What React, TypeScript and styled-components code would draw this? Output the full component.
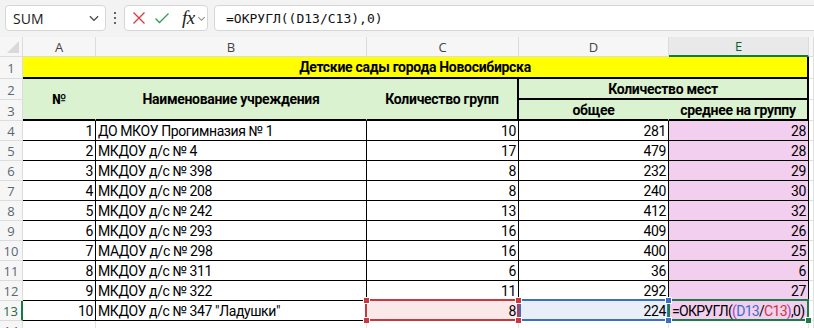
import styled, { createGlobalStyle } from 'styled-components'

const GlobalStyle = createGlobalStyle`
    html, body {
        margin: 0;
        padding: 0;
        background: #f3f3f3;
    }
    body {
        width: 814px;
        height: 328px;
        overflow: hidden;
        font-family: 'Open Sans', 'Noto Sans', sans-serif;
    }
`

const CELL_FONT = `Roboto, 'Noto Sans', sans-serif`

const Toolbar = styled.div`
    display: flex;
    align-items: flex-start;
    gap: 6px;
    height: 37px;
    box-sizing: border-box;
    padding: 5px 0 0 5px;
    overflow: hidden;
`

const Box = styled.div<{ $w?: number }>`
    display: flex;
    align-items: center;
    box-sizing: border-box;
    height: 26px;
    ${(p) => (p.$w ? `width: ${p.$w}px;` : 'flex: 1; margin-right: -12px;')}
    background: #fff;
    border: 1px solid #d6d6d6;
    border-radius: 4px;
`

const NameText = styled.span`
    flex: 1;
    padding-left: 7px;
    font-size: 14px;
    color: #1b1b1b;
`

const Dots = styled.div`
    display: flex;
    flex-direction: column;
    justify-content: center;
    gap: 3px;
    height: 26px;
    width: 6px;
    align-items: center;

    span {
        width: 2px;
        height: 2px;
        border-radius: 1px;
        background: #333;
    }
`

const IconSlot = styled.span<{ $ml: number }>`
    display: flex;
    align-items: center;
    margin-left: ${(p) => p.$ml}px;
`

const Fx = styled.span`
    font-family: 'Liberation Serif', 'DejaVu Serif', serif;
    font-style: italic;
    font-size: 19px;
    color: #222;
    margin-left: 12px;
    letter-spacing: -0.5px;
`

const FormulaText = styled.span`
    padding-left: 11px;
    font-family: 'DejaVu Sans Mono', 'Liberation Mono', monospace;
    font-size: 13px;
    color: #111;
`

const Sheet = styled.div`
    display: grid;
    grid-template-columns: 23px 73px 271px 152px 150px 140px 1fr;
    grid-template-rows: 20px 22px 21px 21px repeat(10, 20px) 1fr;
    height: 291px;
    background: #fff;
`

const Corner = styled.div`
    position: relative;
    background: #f6f6f6;
    border-right: 1px solid #dcdcdc;
    border-bottom: 1px solid #dcdcdc;
    box-sizing: border-box;

    &::after {
        content: '';
        position: absolute;
        right: 3px;
        bottom: 3px;
        border-style: solid;
        border-width: 0 0 12px 12px;
        border-color: transparent transparent #d9d9d9 transparent;
    }
`

const ColHead = styled.div<{ $sel?: boolean }>`
    display: flex;
    align-items: center;
    justify-content: center;
    box-sizing: border-box;
    background: ${(p) => (p.$sel ? '#e9e9e9' : '#f6f6f6')};
    border-right: 1px solid #dcdcdc;
    border-bottom: ${(p) => (p.$sel ? '2px solid #107c41' : '1px solid #dcdcdc')};
    font-size: 13px;
    color: ${(p) => (p.$sel ? '#0e5c30' : '#444')};
`

const RowHead = styled.div<{ $sel?: boolean }>`
    display: flex;
    align-items: center;
    justify-content: center;
    box-sizing: border-box;
    background: #f6f6f6;
    border-right: ${(p) => (p.$sel ? '2px solid #107c41' : '1px solid #dcdcdc')};
    border-bottom: 1px solid #dcdcdc;
    font-size: 13px;
    color: ${(p) => (p.$sel ? '#1d6a43' : '#5a6672')};
    padding-top: 1px;
`

type Edge = 'none' | 'thin' | 'thick' | 'grid'

const edge = (e: Edge = 'grid') =>
    e === 'thick'
        ? '2px solid #000'
        : e === 'thin'
          ? '1px solid #000'
          : e === 'grid'
            ? '1px solid #e1e1e1'
            : '1px solid transparent'

const Cell = styled.div<{
    $bg?: string
    $r?: Edge
    $b?: Edge
    $cs?: number
    $rs?: number
    $align?: 'left' | 'right' | 'center'
    $bold?: boolean
    $mid?: boolean
}>`
    position: relative;
    grid-column: span ${(p) => p.$cs ?? 1};
    grid-row: span ${(p) => p.$rs ?? 1};
    display: flex;
    align-items: ${(p) => (p.$mid ? 'center' : 'flex-end')};
    justify-content: ${(p) =>
        p.$align === 'right' ? 'flex-end' : p.$align === 'center' ? 'center' : 'flex-start'};
    box-sizing: border-box;
    padding: 0 2px 0 2px;
    background: ${(p) => p.$bg ?? '#fff'};
    border-right: ${(p) => edge(p.$r)};
    border-bottom: ${(p) => edge(p.$b)};
    font-family: ${CELL_FONT};
    font-size: 14px;
    letter-spacing: ${(p) => (p.$bold ? '-0.3px' : '-0.4px')};
    font-weight: ${(p) => (p.$bold ? 700 : 400)};
    line-height: 18px;
    color: #000;
    white-space: nowrap;
`

const Selection = styled.div<{ $color: string; $fill: string }>`
    position: absolute;
    top: -2px;
    left: -2px;
    right: -1px;
    bottom: -1px;
    border: 2px solid ${(p) => p.$color};
    background: ${(p) => p.$fill};
    z-index: 0;
`

const Handle = styled.span<{ $color: string; $x: 'l' | 'r'; $y: 't' | 'b' }>`
    position: absolute;
    width: 5px;
    height: 5px;
    background: ${(p) => p.$color};
    border: 1px solid #fff;
    ${(p) => (p.$x === 'l' ? 'left: -4px;' : 'right: -4px;')}
    ${(p) => (p.$y === 't' ? 'top: -4px;' : 'bottom: -4px;')}
    z-index: 2;
`

const Value = styled.span<{ $tight?: boolean }>`
    position: relative;
    z-index: 1;
    ${(p) => (p.$tight ? 'letter-spacing: -0.7px; padding-left: 1px;' : '')}
`

const Ref = styled.span<{ $c: string }>`
    color: ${(p) => p.$c};
`

const YELLOW = '#ffff00'
const GREEN = '#daf2d0'
const PINK = '#f2cfee'

const rows: [number, string, number, number, number][] = [
    [1, 'ДО МКОУ Прогимназия № 1', 10, 281, 28],
    [2, 'МКДОУ д/с № 4', 17, 479, 28],
    [3, 'МКДОУ д/с № 398', 8, 232, 29],
    [4, 'МКДОУ д/с № 208', 8, 240, 30],
    [5, 'МКДОУ д/с № 242', 13, 412, 32],
    [6, 'МКДОУ д/с № 293', 16, 409, 26],
    [7, 'МАДОУ д/с № 298', 16, 400, 25],
    [8, 'МКДОУ д/с № 311', 6, 36, 6],
    [9, 'МКДОУ д/с № 322', 11, 292, 27],
]

const Chevron = ({ size = 12, color = '#444' }: { size?: number; color?: string }) => (
    <svg width={size} height={size} viewBox="0 0 12 12">
        <path d="M2.5 4.5 L6 8 L9.5 4.5" fill="none" stroke={color} strokeWidth="1.1" />
    </svg>
)

export default function App() {
    return (
        <>
            <GlobalStyle />
            <Toolbar>
                <Box $w={101}>
                    <NameText>SUM</NameText>
                    <IconSlot $ml={0} style={{ marginRight: 4 }}>
                        <Chevron size={14} />
                    </IconSlot>
                </Box>
                <Dots>
                    <span />
                    <span />
                    <span />
                </Dots>
                <Box $w={84}>
                    <IconSlot $ml={7}>
                        <svg width="14" height="14" viewBox="0 0 14 14">
                            <path d="M1.5 1.5 L12.5 12.5 M12.5 1.5 L1.5 12.5" stroke="#e0363d" strokeWidth="1.3" />
                        </svg>
                    </IconSlot>
                    <IconSlot $ml={8}>
                        <svg width="16" height="14" viewBox="0 0 16 14">
                            <path d="M1.5 7.5 L5.5 11.5 L14.5 2.5" fill="none" stroke="#2f9e57" strokeWidth="1.3" />
                        </svg>
                    </IconSlot>
                    <Fx>fx</Fx>
                    <IconSlot $ml={1}>
                        <Chevron size={11} color="#888" />
                    </IconSlot>
                </Box>
                <Box>
                    <FormulaText>=ОКРУГЛ((D13/C13),0)</FormulaText>
                </Box>
            </Toolbar>

            <Sheet>
                <Corner />
                <ColHead>A</ColHead>
                <ColHead>B</ColHead>
                <ColHead>C</ColHead>
                <ColHead>D</ColHead>
                <ColHead $sel>E</ColHead>
                <ColHead />

                <RowHead>1</RowHead>
                <Cell $cs={5} $bg={YELLOW} $r="thick" $b="thick" $align="center" $bold $mid>
                    Детские сады города Новосибирска
                </Cell>
                <Cell />

                <RowHead>2</RowHead>
                <Cell $rs={2} $bg={GREEN} $r="none" $b="thick" $align="center" $bold $mid>
                    №
                </Cell>
                <Cell $rs={2} $bg={GREEN} $r="none" $b="thick" $align="center" $bold $mid>
                    Наименование учреждения
                </Cell>
                <Cell $rs={2} $bg={GREEN} $r="thick" $b="thick" $align="center" $bold $mid>
                    Количество групп
                </Cell>
                <Cell $cs={2} $bg={GREEN} $r="thick" $b="thick" $align="center" $bold $mid>
                    Количество мест
                </Cell>
                <Cell />

                <RowHead>3</RowHead>
                <Cell $bg={GREEN} $r="none" $b="thick" $align="center" $bold $mid>
                    общее
                </Cell>
                <Cell $bg={GREEN} $r="thick" $b="thick" $align="center" $bold $mid>
                    среднее на группу
                </Cell>
                <Cell />

                {rows.map(([n, name, groups, total, avg]) => (
                    <Row key={n} n={n} name={name} groups={groups} total={total} avg={avg} />
                ))}

                <RowHead $sel>13</RowHead>
                <Cell $r="thin" $b="thin" $align="right">
                    10
                </Cell>
                <Cell $r="thin" $b="thin">
                    МКДОУ д/с № 347 "Ладушки"
                </Cell>
                <Cell $r="thin" $b="thin" $align="right">
                    <Selection $color="#c8393f" $fill="#fbe8e8" />
                    <Handle $color="#c8393f" $x="l" $y="t" />
                    <Handle $color="#c8393f" $x="r" $y="t" />
                    <Handle $color="#c8393f" $x="l" $y="b" />
                    <Handle $color="#c8393f" $x="r" $y="b" />
                    <Value>8</Value>
                </Cell>
                <Cell $r="thin" $b="thin" $align="right">
                    <Selection $color="#3b6fc6" $fill="#e9eef8" style={{ left: 0 }} />
                    <Handle $color="#3b6fc6" $x="r" $y="t" />
                    <Handle $color="#3b6fc6" $x="r" $y="b" />
                    <Value>224</Value>
                </Cell>
                <Cell $bg={PINK} $r="thin" $b="thin">
                    <Selection $color="#1e7b45" $fill="transparent" style={{ left: -1 }} />
                    <Handle $color="#1e7b45" $x="r" $y="b" />
                    <Value $tight>
                        =ОКРУГЛ(<Ref $c="#a548a8">(</Ref>
                        <Ref $c="#3b6fc6">D13</Ref>/<Ref $c="#c8393f">C13</Ref>
                        <Ref $c="#a548a8">)</Ref>,0)
                    </Value>
                </Cell>
                <Cell />

                <RowHead>14</RowHead>
                <Cell />
                <Cell />
                <Cell />
                <Cell />
                <Cell />
                <Cell />
            </Sheet>
        </>
    )
}

const Row = ({
    n,
    name,
    groups,
    total,
    avg,
}: {
    n: number
    name: string
    groups: number
    total: number
    avg: number
}) => (
    <>
        <RowHead>{n + 3}</RowHead>
        <Cell $r="thin" $b="thin" $align="right">
            {n}
        </Cell>
        <Cell $r="thin" $b="thin">
            {name}
        </Cell>
        <Cell $r="thin" $b="thin" $align="right">
            {groups}
        </Cell>
        <Cell $r="thin" $b="thin" $align="right">
            {total}
        </Cell>
        <Cell $bg={PINK} $r="thin" $b="thin" $align="right">
            {avg}
        </Cell>
        <Cell />
    </>
)
